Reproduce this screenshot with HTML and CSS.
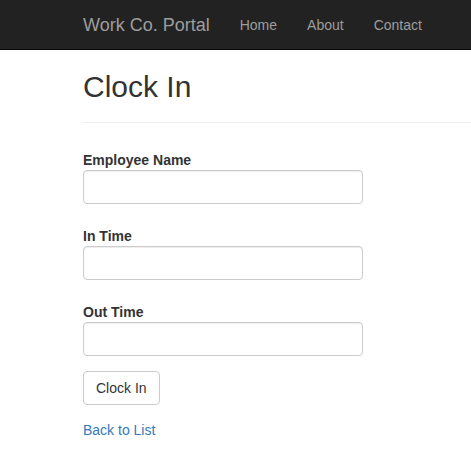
FILE: index.html
```html
<!DOCTYPE html>
<html>
<head>
<meta charset="utf-8">
<title>Clock In - Work Co. Portal</title>
<link rel="stylesheet" href="styles.css">
</head>
<body>
<header class="navbar">
  <div class="navbar-inner">
    <a class="brand" href="#">Work Co. Portal</a>
    <nav class="nav">
      <a class="nav-link" href="#">Home</a>
      <a class="nav-link" href="#">About</a>
      <a class="nav-link" href="#">Contact</a>
    </nav>
  </div>
</header>
<main class="container">
  <h2 class="title">Clock In</h2>
  <hr class="rule">
  <form class="form">
    <div class="form-group">
      <label class="control-label" for="name">Employee Name</label>
      <input class="form-control" id="name" type="text">
    </div>
    <div class="form-group">
      <label class="control-label" for="in">In Time</label>
      <input class="form-control" id="in" type="text">
    </div>
    <div class="form-group">
      <label class="control-label" for="out">Out Time</label>
      <input class="form-control" id="out" type="text">
    </div>
    <div class="form-group">
      <button class="btn" type="button">Clock In</button>
    </div>
  </form>
  <div class="back"><a class="link" href="#">Back to List</a></div>
</main>
</body>
</html>
```
FILE: styles.css
```css
* { box-sizing: border-box; }
html, body { margin: 0; padding: 0; }
body {
  font-family: "Liberation Sans", Arial, sans-serif;
  font-size: 14px;
  line-height: 20px;
  color: #333;
  background: #fff;
}
.navbar {
  height: 50px;
  background: #222;
  border-bottom: 1px solid #080808;
}
.navbar-inner {
  display: flex;
  align-items: flex-start;
  padding-left: 68px;
}
.brand {
  display: block;
  padding: 15px;
  height: 50px;
  font-size: 18px;
  line-height: 20px;
  color: #9d9d9d;
  text-decoration: none;
}
.nav { display: flex; }
.nav-link {
  display: block;
  padding: 15px;
  line-height: 20px;
  font-size: 14px;
  color: #9d9d9d;
  text-decoration: none;
}
.container { padding-left: 83px; }
.title {
  margin: 20px 0 0;
  font-size: 30px;
  line-height: 33px;
  font-weight: 500;
  color: #333;
}
.rule {
  margin: 19px 0 0;
  border: 0;
  border-top: 1px solid #eee;
  height: 0;
}
.form { margin: 20px 0 0; }
.form-group { margin-bottom: 15px; }
.control-label {
  display: block;
  padding-top: 7px;
  margin: 0;
  font-weight: bold;
  line-height: 20px;
}
.form-control {
  display: block;
  width: 280px;
  height: 34px;
  margin: 0;
  padding: 6px 12px;
  font: 14px/20px "Liberation Sans", Arial, sans-serif;
  color: #555;
  background: #fff;
  border: 1px solid #ccc;
  border-radius: 4px;
  box-shadow: inset 0 1px 1px rgba(0,0,0,.075);
}
.btn {
  display: inline-block;
  height: 34px;
  padding: 6px 12px;
  font: 14px/20px "Liberation Sans", Arial, sans-serif;
  color: #333;
  background: #fff;
  border: 1px solid #ccc;
  border-radius: 4px;
  margin: 0;
}
.back { line-height: 20px; }
.link { color: #337ab7; text-decoration: none; }
```
